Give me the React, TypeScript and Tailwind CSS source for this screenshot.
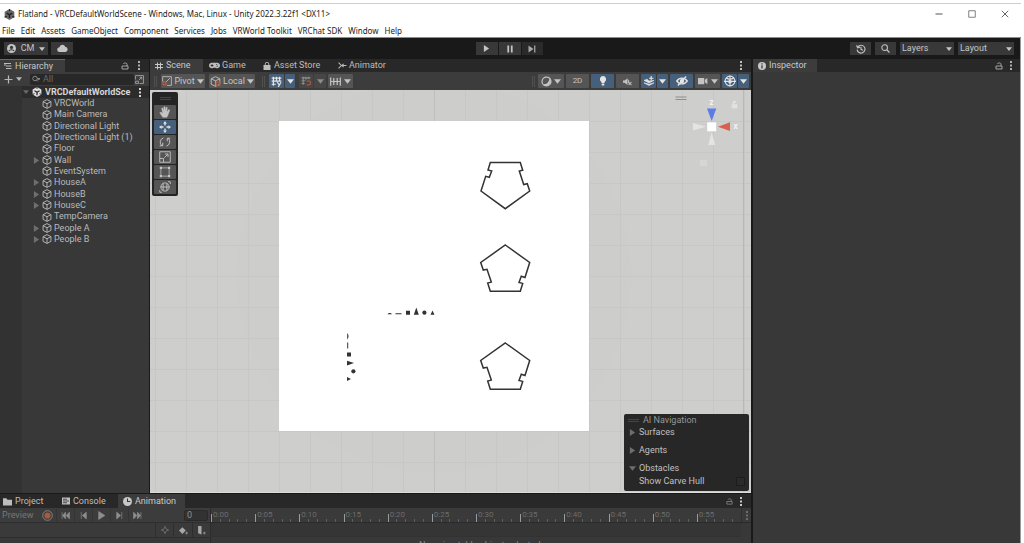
import type { ReactNode } from 'react';
import { clsx } from 'clsx';

const menuItems = [
  'File',
  'Edit',
  'Assets',
  'GameObject',
  'Component',
  'Services',
  'Jobs',
  'VRWorld Toolkit',
  'VRChat SDK',
  'Window',
  'Help',
];

const hierarchyItems = [
  { name: 'VRCWorld', expandable: false },
  { name: 'Main Camera', expandable: false },
  { name: 'Directional Light', expandable: false },
  { name: 'Directional Light (1)', expandable: false },
  { name: 'Floor', expandable: false },
  { name: 'Wall', expandable: true },
  { name: 'EventSystem', expandable: false },
  { name: 'HouseA', expandable: true },
  { name: 'HouseB', expandable: true },
  { name: 'HouseC', expandable: true },
  { name: 'TempCamera', expandable: false },
  { name: 'People A', expandable: true },
  { name: 'People B', expandable: true },
];

const timeLabels = [
  '0:00', '0:05', '0:10', '0:15', '0:20', '0:25',
  '0:30', '0:35', '0:40', '0:45', '0:50', '0:55',
];

/* ---------- icons ---------- */

type IconProps = { className?: string; children?: ReactNode };

function Icon({ className, children }: IconProps) {
  return (
    <svg
      viewBox="0 0 16 16"
      className={clsx('shrink-0', className)}
      fill="none"
      stroke="currentColor"
      strokeWidth="1.8"
      aria-hidden="true"
    >
      {children}
    </svg>
  );
}

function Caret({ className = 'size-[7px]' }: IconProps) {
  return (
    <Icon className={className}>
      <path d="M0 3h16l-8 10z" fill="currentColor" stroke="none" />
    </Icon>
  );
}

function RightCaret({ className = 'size-[7px]' }: IconProps) {
  return (
    <Icon className={className}>
      <path d="M2 0v16l12-8z" fill="currentColor" stroke="none" />
    </Icon>
  );
}

function Kebab({ className = 'h-[9px] w-[4px]' }: IconProps) {
  return (
    <svg viewBox="0 0 4 9" className={clsx('shrink-0', className)} fill="currentColor" aria-hidden="true">
      <path d="M1 0h2v2H1zM1 3.500h2v2H1zM1 7h2v2H1z" />
    </svg>
  );
}

function LockIcon({ className = 'size-[8px]' }: IconProps) {
  return (
    <Icon className={className}>
      <path d="M2 8h12v6H2zM12 8V4.500C12 2.500 10.500 2 8.500 2S5 2.500 5 4" />
    </Icon>
  );
}

function UnityCube({ className = 'size-[9px]' }: IconProps) {
  return (
    <Icon className={className}>
      <path d="M8 0l7 4v8l-7 4-7-4V4z" fill="currentColor" stroke="none" />
      <path d="M8 8.500V13M8 8.500L4 6M8 8.500L12 6" stroke="#222" strokeWidth="2" />
      <path d="M8 0v3M1 12l3-1.500M15 12l-3-1.500" stroke="#222" strokeWidth="1.500" />
    </Icon>
  );
}

function CubeIcon({ className = 'size-[10px]' }: IconProps) {
  return (
    <Icon className={className}>
      <path d="M8 1l6.300 3.200v7.600L8 15l-6.300-3.200V4.200zM1.700 4.200L8 7.600l6.300-3.400M8 7.600V15" strokeWidth="1.500" />
    </Icon>
  );
}

function Grip() {
  return <span className="h-[11px] w-[3px] shrink-0 border-x border-[#505050]" />;
}

/* ---------- shared controls ---------- */

type ToolButtonProps = {
  label: string;
  className?: string;
  active?: boolean;
  children: ReactNode;
};

function ToolButton({ label, className, active, children }: ToolButtonProps) {
  return (
    <button
      type="button"
      aria-label={label}
      className={clsx(
        'flex h-[14px] shrink-0 items-center justify-center rounded-[1px]',
        active ? 'bg-[#46607c] text-[#e4e4e4]' : 'bg-[#555555] text-[#c4c4c4]',
        className
      )}
    >
      {children}
    </button>
  );
}

type TabProps = { label: string; icon: ReactNode; className?: string; active?: boolean };

function Tab({ label, icon, className, active }: TabProps) {
  return (
    <button
      type="button"
      role="tab"
      aria-selected={active ?? false}
      className={clsx(
        'flex h-full shrink-0 items-center whitespace-nowrap',
        active ? 'bg-[#3c3c3c] text-[#c8c8c8]' : 'text-[#bdbdbd]',
        className
      )}
    >
      {icon}
      {label}
    </button>
  );
}

/* ---------- window chrome ---------- */

function TitleBar() {
  return (
    <header className="shrink-0 border-b border-[#8c8c8c] bg-white font-['Noto_Sans','Open_Sans',sans-serif] text-[#1c1c1c]">
      <div className="h-[3px]" />
      <div className="flex h-[21px] items-center justify-between border-t border-[#cfcfcf] pl-1">
        <div className="flex items-center gap-[3px] whitespace-nowrap text-[8px]">
          <UnityCube className="size-[11px] text-[#666]" />
          <h1>Flatland - VRCDefaultWorldScene - Windows, Mac, Linux - Unity 2022.3.22f1 &lt;DX11&gt;</h1>
        </div>
        <div className="flex items-center gap-[25px] pr-[12px] text-[#555]">
          <button type="button" aria-label="Minimize">
            <Icon className="size-[8px]">
              <path d="M1 8h14" strokeWidth="2" />
            </Icon>
          </button>
          <button type="button" aria-label="Maximize">
            <Icon className="size-[8px]">
              <path d="M1.500 1.500h13v13h-13z" strokeWidth="1.500" />
            </Icon>
          </button>
          <button type="button" aria-label="Close">
            <Icon className="size-[8px]">
              <path d="M1.500 1.500l13 13M14.500 1.500l-13 13" />
            </Icon>
          </button>
        </div>
      </div>
      <nav className="flex h-[13px] items-center gap-[6px] whitespace-nowrap pl-[2px] text-[8px]">
        {menuItems.map((item) => (
          <button key={item} type="button">
            {item}
          </button>
        ))}
      </nav>
    </header>
  );
}

function MainToolbar() {
  const button = 'flex h-[13px] items-center justify-center bg-[#383838] text-[#c4c4c4]';
  return (
    <div className="grid h-[21px] shrink-0 grid-cols-[1fr_auto_1fr] items-center bg-[#191919] pl-1 pr-[6px] text-[9px]">
      <div className="flex gap-[3px]">
        <button type="button" className={clsx(button, 'w-[44px] gap-[5px]')}>
          <Icon className="size-[9px]">
            <circle cx="8" cy="8" r="8" fill="currentColor" stroke="none" />
            <circle cx="8" cy="6" r="2.800" fill="#383838" stroke="none" />
            <path d="M3.500 12.500c1-3 8-3 9 0" stroke="#383838" strokeWidth="2" />
          </Icon>
          CM
          <Caret className="size-[6px]" />
        </button>
        <button type="button" aria-label="Cloud" className={clsx(button, 'w-[22px]')}>
          <Icon className="size-[11px]">
            <path
              d="M4 13a3.500 3.500 0 0 1-.5-7A4.500 4.500 0 0 1 12 5.500 3.800 3.800 0 0 1 12.500 13z"
              fill="currentColor"
              stroke="none"
            />
          </Icon>
        </button>
      </div>
      <div className="flex gap-px">
        <button type="button" aria-label="Play" className={clsx(button, 'w-[22px]')}>
          <RightCaret className="size-[7px]" />
        </button>
        <button type="button" aria-label="Pause" className={clsx(button, 'w-[22px]')}>
          <Icon className="size-[8px]">
            <path d="M4.500 1v14M11.500 1v14" strokeWidth="3.500" />
          </Icon>
        </button>
        <button type="button" aria-label="Step" className="flex h-[13px] w-[21px] items-center justify-center bg-[#2a2a2a] text-[#a8a8a8]">
          <Icon className="size-[8px]">
            <path d="M1 1v14l10-7z" fill="currentColor" stroke="none" />
            <path d="M13.500 1v14" strokeWidth="2.500" />
          </Icon>
        </button>
      </div>
      <div className="flex justify-end gap-1">
        <button type="button" aria-label="Undo history" className={clsx(button, 'w-[21px]')}>
          <Icon className="size-[10px]">
            <path d="M3 4.500A6.300 6.300 0 1 1 1.800 9M1 2l1.500 4L6.500 5M8 4.500V8.500l3 1.500" />
          </Icon>
        </button>
        <button type="button" aria-label="Search" className={clsx(button, 'w-[21px]')}>
          <Icon className="size-[9px]">
            <circle cx="6.500" cy="6.500" r="5" />
            <path d="M10.500 10.500L15 15" strokeWidth="2.200" />
          </Icon>
        </button>
        <button type="button" className="flex h-[13px] w-[54px] items-center justify-between bg-[#383838] px-[2px] text-[#c4c4c4]">
          Layers
          <Caret className="size-[6px]" />
        </button>
        <button type="button" className="flex h-[13px] w-[56px] items-center justify-between bg-[#383838] px-[2px] text-[#c4c4c4]">
          Layout
          <Caret className="size-[6px]" />
        </button>
      </div>
    </div>
  );
}

/* ---------- hierarchy ---------- */

function Hierarchy() {
  return (
    <aside className="flex w-[149px] shrink-0 flex-col overflow-hidden bg-[#383838]">
      <div className="flex h-[13px] shrink-0 items-center justify-between bg-[#282828]">
        <Tab
          active
          label="Hierarchy"
          className="w-[65px] gap-[3px] border-t border-[#3a72b0] pl-1"
          icon={
            <Icon className="size-[8px]">
              <path d="M0 3h14M4 8h11M4 13h11M2 3v5" />
            </Icon>
          }
        />
        <div className="flex items-center gap-[8px] pr-[8px] text-[#b0b0b0]">
          <LockIcon />
          <Kebab />
        </div>
      </div>
      <div className="flex h-[14px] shrink-0 items-center bg-[#3c3c3c] pl-1 pr-[5px] text-[#b8b8b8]">
        <button type="button" aria-label="Create" className="flex items-center gap-[3px]">
          <Icon className="size-[9px]">
            <path d="M8 1v14M1 8h14" strokeWidth="2.200" />
          </Icon>
          <Caret className="size-[6px]" />
        </button>
        <label className="ml-[8px] flex h-[11px] min-w-0 flex-1 items-center gap-[3px] rounded-[2px] bg-[#282828] pl-[2px]">
          <Icon className="size-[8px] text-[#909090]">
            <circle cx="6" cy="7" r="4.500" />
            <path d="M9 10l3 3M11 7h5l-2.500 3z" />
          </Icon>
          <input
            aria-label="Search hierarchy"
            placeholder="All"
            className="min-w-0 flex-1 bg-transparent text-[9px] outline-none placeholder:text-[#6a6a6a]"
          />
        </label>
        <button type="button" aria-label="Open search" className="ml-px">
          <Icon className="size-[9px]">
            <path d="M1 8V1h14v14H8M1 11h5v4H1zM7 9l5-5M8 4h4v4" strokeWidth="1.300" />
          </Icon>
        </button>
      </div>
      <div className="flex flex-1">
        <div className="w-[22px] shrink-0 bg-[#323232]" />
        <div className="min-w-0 flex-1">
          <div className="flex h-[12px] items-center gap-[3px] bg-[#2c2c2c] pl-px pr-[7px] font-bold text-[#d6d6d6]">
            <Caret className="size-[6px] text-[#6a6a6a]" />
            <UnityCube className="size-[10px] text-[#e0e0e0]" />
            <span className="min-w-0 flex-1 overflow-hidden whitespace-nowrap">VRCDefaultWorldSce</span>
            <Kebab />
          </div>
          <ul className="grid h-[147px] auto-rows-fr text-[#bababa]">
            {hierarchyItems.map((item) => (
              <li key={item.name} className="flex items-center whitespace-nowrap pl-[11px]">
                <span className="flex w-[9px]">
                  {item.expandable && <RightCaret className="size-[7px] text-[#6e6e6e]" />}
                </span>
                <CubeIcon className="mr-[2px] size-[10px]" />
                {item.name}
              </li>
            ))}
          </ul>
        </div>
      </div>
    </aside>
  );
}

/* ---------- scene view ---------- */

function SceneTabs() {
  return (
    <div className="flex h-[13px] shrink-0 items-center bg-[#282828]" role="tablist">
      <Tab
        active
        label="Scene"
        className="w-[53px] gap-[3px] pl-[5px]"
        icon={
          <Icon className="size-[8px]">
            <path d="M5 1v14M11 1v14M0 5h16M0 11h16" strokeWidth="2" />
          </Icon>
        }
      />
      <Tab
        label="Game"
        className="w-[55px] gap-[2px] pl-[6px]"
        icon={
          <svg viewBox="0 0 20 12" className="h-[7px] w-[11px]" aria-hidden="true">
            <path d="M5.500 1h9a5 5 0 1 1-2.500 9H8A5 5 0 1 1 5.500 1z" fill="currentColor" />
            <path d="M5.500 3.500v5M3 6h5M13 4.500h2M14 7.500h2" stroke="#282828" strokeWidth="1.600" />
          </svg>
        }
      />
      <Tab
        label="Asset Store"
        className="w-[75px] gap-[3px] pl-[5px]"
        icon={
          <Icon className="size-[8px]">
            <path d="M1 6h14v10H1z" fill="currentColor" stroke="none" />
            <path d="M4.500 7V4a3.500 3.500 0 0 1 7 0v3" />
          </Icon>
        }
      />
      <Tab
        label="Animator"
        className="gap-[2px] pl-[5px]"
        icon={
          <Icon className="size-[9px]">
            <path d="M1 3l5 5-5 5M6 8h9M10 5l-3 3 3 3" />
          </Icon>
        }
      />
      <Kebab className="ml-auto mr-[8px] h-[9px] w-[4px] text-[#c0c0c0]" />
    </div>
  );
}

function SceneToolbar() {
  return (
    <div className="flex h-[18px] shrink-0 items-center justify-between bg-[#3c3c3c] pl-[4px] pr-[2px]">
      <div className="flex items-center">
        <Grip />
        <ToolButton label="Pivot" className="ml-[4px] w-[44px] gap-[2px]">
          <Icon className="size-[10px]">
            <path d="M1 9V1h14v14H8M6 10l7-7" strokeWidth="1.300" />
            <circle cx="4" cy="12" r="2.500" stroke="#c8583a" strokeWidth="2" />
          </Icon>
          Pivot
          <Caret />
        </ToolButton>
        <ToolButton label="Local" className="ml-[4px] w-[46px] gap-[2px]">
          <Icon className="size-[11px]">
            <path d="M8 1l6.300 3v8L8 15l-6.300-3V4zM1.700 4L8 7l6.300-3M8 7v8" strokeWidth="1.300" />
            <path d="M9 9h5v5H9z" stroke="#c8583a" />
          </Icon>
          Local
          <Caret />
        </ToolButton>
        <span className="ml-[7px] flex">
          <Grip />
        </span>
        <ToolButton active label="Grid visibility" className="ml-[4px] w-[15px]">
          <Icon className="size-[11px]">
            <path d="M3.500 1v13M8 1v7M12.500 1v6M1 3h14M1 7.500h14M1 12h6M9 9l3 4M14.500 9l-4 7" />
          </Icon>
        </ToolButton>
        <ToolButton active label="Grid options" className="ml-px w-[10px]">
          <Caret />
        </ToolButton>
        <ToolButton label="Grid snapping" className="ml-[4px] w-[14px] bg-[#464646]! text-[#8c8c8c]!">
          <Icon className="size-[10px]">
            <path d="M3.500 1v13M8 1v5M12.500 1v4M1 3h14M1 7.500h6M1 12h5" />
            <path d="M9 8h3.500a2.800 2.800 0 0 1 0 6H9" stroke="#a85a42" strokeWidth="2" />
          </Icon>
        </ToolButton>
        <ToolButton label="Snap options" className="ml-px w-[12px] bg-[#464646]! text-[#8c8c8c]!">
          <Caret />
        </ToolButton>
        <ToolButton label="Snap increment" className="ml-[2px] w-[25px] gap-[3px]">
          <Icon className="size-[11px]">
            <path d="M1 2v12M15 2v12M5.500 3v10M10.500 3v10M2 8h12" />
          </Icon>
          <Caret />
        </ToolButton>
      </div>
      <div className="flex items-center gap-[2px]">
        <span className="mr-px flex">
          <Grip />
        </span>
        <ToolButton label="Draw mode" className="w-[26px] gap-[2px]">
          <Icon className="size-[11px]">
            <circle cx="8" cy="8" r="6.500" strokeWidth="1.800" />
            <path d="M13 5a6.500 6.500 0 0 1-9 8c5 0 8-3 9-8z" fill="currentColor" />
          </Icon>
          <Caret />
        </ToolButton>
        <ToolButton label="2D" className="w-[23px] text-[8px]">
          2D
        </ToolButton>
        <ToolButton active label="Lighting" className="w-[23px]">
          <Icon className="size-[10px]">
            <path d="M8 0a5 5 0 0 1 3 9l-1 2H6L5 9a5 5 0 0 1 3-9zM6 12h4v3H6z" fill="currentColor" stroke="none" />
          </Icon>
        </ToolButton>
        <ToolButton label="Audio" className="w-[23px]">
          <Icon className="size-[9px]">
            <path d="M0 6h3l5-4v12L3 10H0z" fill="currentColor" stroke="none" />
            <path d="M10 5v6M10 9l5 5M15 9l-5 5" />
          </Icon>
        </ToolButton>
        <div className="flex gap-px">
          <ToolButton active label="Effects" className="w-[15px]">
            <Icon className="size-[10px]">
              <path d="M0 7l5-2 3 3 8-1-8 4zM0 11l8 4 8-4-8 2z" fill="currentColor" strokeWidth="1" />
              <path d="M11.500 0v7M8 3.500h7" />
            </Icon>
          </ToolButton>
          <ToolButton active label="Effects options" className="w-[11px]">
            <Caret />
          </ToolButton>
        </div>
        <ToolButton active label="Scene visibility" className="w-[23px]">
          <Icon className="size-[12px]">
            <path d="M1 8c3.500-5 10.500-5 14 0-3.500 5-10.500 5-14 0zM2.500 14L13.500 2" />
            <circle cx="8" cy="8" r="2" fill="currentColor" />
          </Icon>
        </ToolButton>
        <ToolButton label="Camera settings" className="w-[25px] gap-[3px]">
          <Icon className="size-[10px]">
            <path d="M0 3h10v10H0zM11 6l4-3v10l-4-3z" fill="currentColor" stroke="none" />
          </Icon>
          <Caret />
        </ToolButton>
        <div className="flex gap-px">
          <ToolButton active label="Gizmos" className="w-[15px]">
            <Icon className="size-[12px]">
              <circle cx="8" cy="8" r="6.500" strokeWidth="1.400" />
              <path d="M8 1v14M0 8.500h16M3 4c3 2 7 2 10 0" strokeWidth="1.400" />
              <circle cx="8" cy="9" r="1.500" fill="currentColor" />
            </Icon>
          </ToolButton>
          <ToolButton active label="Gizmo options" className="w-[11px]">
            <Caret />
          </ToolButton>
        </div>
      </div>
    </div>
  );
}

const sceneTools = [
  {
    name: 'View',
    icon: (
      <path
        d="M5 15L1 9l1.500-1L5 10 3.500 3 5 2.500 6.500 7V1H8v6l1.500-5.500L11 2l-.5 6L13 4.500l1.300.8L12 12l-1.500 3z"
        fill="currentColor"
        strokeWidth=".6"
      />
    ),
  },
  {
    name: 'Move',
    icon: (
      <>
        <path d="M8 3v3M8 10v3M3 8h3M10 8h3" />
        <path d="M8 0l2.500 3.500h-5zM8 16l2.500-3.500h-5zM0 8l3.500-2.500v5zM16 8l-3.500-2.500v5z" fill="currentColor" stroke="none" />
      </>
    ),
  },
  {
    name: 'Rotate',
    icon: <path d="M6 2.500A6 6 0 0 0 4 13M10 13.500A6 6 0 0 0 12 3M1 13h4V9M15 3h-4v4" strokeWidth="1.300" />,
  },
  {
    name: 'Scale',
    icon: <path d="M1 1h14v14H1zM1 10h5v5M7 9l5-5M8 4h4v4" strokeWidth="1.200" />,
  },
  {
    name: 'Rect',
    icon: (
      <>
        <path d="M2.500 2.500h11v11h-11z" strokeWidth="1" />
        <path d="M1 1h3v3H1zM12 1h3v3h-3zM1 12h3v3H1zM12 12h3v3h-3z" fill="currentColor" stroke="none" />
      </>
    ),
  },
  {
    name: 'Transform',
    icon: (
      <>
        <circle cx="8" cy="8" r="5.500" strokeWidth="1.200" />
        <path d="M5.500 3v10M10.500 3v10M2 8h12M12 1h3v3M1 12v3h3" strokeWidth="1.200" />
      </>
    ),
  },
];

function ToolPalette() {
  return (
    <div className="absolute left-[2px] top-[2px] flex w-[26px] flex-col gap-px rounded-[2px] bg-[#242424] px-[2px] pb-[2px]">
      <div className="flex h-[12px] items-center justify-center">
        <span className="h-[3px] w-[11px] border-y border-[#454545]" />
      </div>
      {sceneTools.map((tool) => (
        <ToolButton key={tool.name} label={tool.name} active={tool.name === 'Move'} className="w-[22px]">
          <Icon className="size-[12px]">{tool.icon}</Icon>
        </ToolButton>
      ))}
    </div>
  );
}

function NavigationOverlay() {
  return (
    <section className="absolute bottom-px right-[2px] h-[77px] w-[125px] rounded-[2px] bg-[#272727] text-[#c0c0c0]">
      <h2 className="flex h-[12px] items-center gap-[4px] pl-[4px] text-[#969696]">
        <span className="h-[3px] w-[11px] border-y border-[#454545]" />
        AI Navigation
      </h2>
      <button type="button" className="flex h-[13px] items-center gap-[3px] pl-[5px]">
        <RightCaret className="size-[7px] text-[#6e6e6e]" />
        Surfaces
      </button>
      <button type="button" className="mt-[5px] flex h-[13px] items-center gap-[3px] pl-[5px]">
        <RightCaret className="size-[7px] text-[#6e6e6e]" />
        Agents
      </button>
      <button type="button" className="mt-[5px] flex h-[13px] items-center gap-[3px] pl-[5px]">
        <Caret className="size-[7px] text-[#6e6e6e]" />
        Obstacles
      </button>
      <label className="flex h-[13px] items-center justify-between pl-[15px] pr-[4px]">
        Show Carve Hull
        <input type="checkbox" className="size-[9px] appearance-none rounded-[1px] border border-[#1c1c1c] bg-[#2a2a2a]" />
      </label>
    </section>
  );
}

// グリッドは31単位、中心は (434, 276)
const gridX = Array.from({ length: 20 }, (_, i) => 155 + i * 31);
const gridY = Array.from({ length: 13 }, (_, i) => 121 + i * 31);

const houseUp =
  'M505.300 245l24.400 17.500-4.700 15-3.700-1.300-2.300 6.200 3.700 1-2.400 7.800h-30l-2.600-8.100 3.600-1-4.300-12.800-3.700 .8-2.600-7.600z';

function SceneCanvas() {
  return (
    <svg
      viewBox="150 90 601 402"
      preserveAspectRatio="xMidYMid slice"
      className="absolute inset-0 size-full"
      role="img"
      aria-label="Scene"
    >
      <path d="M150 90h601v403H150z" fill="#cececc" />
      <circle cx="434" cy="276" r="197" fill="#cdcdcb" />
      {gridX.map((x) => (
        <path key={x} d={`M${x}.500 90v403`} stroke={x === 434 ? '#bebebc' : '#c7c7c5'} />
      ))}
      {gridY.map((y) => (
        <path key={y} d={`M150 ${y}.500h601`} stroke="#c7c7c5" />
      ))}
      <path d="M743.500 90v403" stroke="#b8b8b6" />
      <path d="M279 121h310v310H279z" fill="#fff" />

      {/* houses */}
      <g fill="none" stroke="#333336" strokeWidth="1.500">
        <path d="M490.300 162.500h30l2.400 7.800-3.400 .7 4.400 13.600 3.600-.9 2.400 7.300-24.400 17.700-24.300-17.700 4.700-14.700 3.600 1 2.400-6.300-3.700-1z" />
        <path d={houseUp} />
        <path d={houseUp} transform="translate(0 98)" />
      </g>

      {/* people */}
      <g fill="#333336">
        <path d="M387.500 314.200c1-1.600 3.500-1.600 4.500 0zM395.500 313.200h6v1h-6zM406 310.700h4v4h-4zM416.300 307.500l2.500 7.200h-5zM432.500 310.500l2 4.200h-4z" />
        <circle cx="424.400" cy="312.700" r="2.100" />
        <path d="M347.200 333c1.800 1.500 1.800 5 0 6.500zM347.200 342.500h1v6h-1zM347 352.500h4v4h-4zM347 360.700l7 2.400-7 2.300zM347 377l4 2-4 2z" />
        <circle cx="353.400" cy="371.300" r="2.100" />
      </g>

      {/* orientation gizmo */}
      <path d="M675.500 97h11M675.500 99.500h11" stroke="#8e8e8e" strokeWidth="1.200" />
      <path d="M707 108.500h9.300L711.700 121z" fill="#5c7ce8" />
      <path d="M718 126.700l12-4.400v8.800z" fill="#d8604f" />
      <path d="M706 126.700l-13-3.700v7.400zM711.700 132l-3.500 13h7z" fill="#e4e4e2" />
      <path d="M707.200 122.300h9v9h-9z" fill="#fff" />
      <g className="font-['Inter',sans-serif] text-[8px] font-bold" fill="#f2f2f2" textAnchor="middle">
        <text x="711.500" y="105">z</text>
        <text x="735.500" y="129">x</text>
      </g>
      <path d="M732 104.500h5v3.500h-5zM733 104v-1.500a1.500 1.500 0 0 1 3 0" fill="#e2e2e0" stroke="#e2e2e0" strokeWidth=".8" />
      <path d="M700 161h7M700 163h7M700 165h7" stroke="#dededc" />
    </svg>
  );
}

function SceneView() {
  return (
    <main className="flex min-w-0 flex-1 flex-col">
      <SceneTabs />
      <SceneToolbar />
      <div className="relative flex-1 overflow-hidden border-b border-[#dcdcda] bg-[#cececc]">
        <SceneCanvas />
        <ToolPalette />
        <NavigationOverlay />
      </div>
    </main>
  );
}

/* ---------- animation panel ---------- */

const transport = [
  { name: 'First key', path: 'M2 2v12M8 2v12L3 8zM15 2v12L9 8z' },
  { name: 'Previous key', path: 'M4 2v12M13 2v12L6 8z' },
  { name: 'Play animation', path: 'M3 1v14l11-7z' },
  { name: 'Next key', path: 'M12 2v12M3 2v12l7-6z' },
  { name: 'Last key', path: 'M14 2v12M8 2v12l5-6zM1 2v12l6-6z' },
];

function AnimationPanel() {
  return (
    <section className="flex h-[49px] shrink-0 flex-col overflow-hidden bg-[#383838]">
      <div className="flex h-[14px] shrink-0 items-center bg-[#282828]" role="tablist">
        <Tab
          label="Project"
          className="w-[57px] gap-[3px] pl-[3px]"
          icon={
            <Icon className="size-[9px]">
              <path d="M0 2h6l2 3h8v10H0z" fill="currentColor" stroke="none" />
            </Icon>
          }
        />
        <Tab
          label="Console"
          className="w-[61px] gap-[3px] pl-[5px]"
          icon={
            <Icon className="size-[8px]">
              <path d="M0 1h16v14H0z" fill="currentColor" stroke="none" />
              <path d="M2 4.500h8M2 8h12M2 11.500h8" stroke="#282828" strokeWidth="1.500" />
            </Icon>
          }
        />
        <Tab
          active
          label="Animation"
          className="w-[67px] gap-[3px] pl-[5px]"
          icon={
            <Icon className="size-[9px]">
              <circle cx="8" cy="8" r="8" fill="currentColor" stroke="none" />
              <path d="M8 2.500V8h5" stroke="#333" strokeWidth="1.800" />
            </Icon>
          }
        />
        <div className="ml-auto flex items-center gap-[6px] pr-[8px] text-[#8a8a8a]">
          <LockIcon className="size-[7px]" />
          <Kebab className="h-[9px] w-[4px] text-[#c8c8c8]" />
        </div>
      </div>
      <div className="flex min-h-0 flex-1">
        <div className="flex w-[211px] shrink-0 flex-col border-r border-[#2c2c2c] text-[#8e8e8e]">
          <div className="flex h-[15px] shrink-0 items-center border-b border-[#2e2e2e] bg-[#3c3c3c] pl-[2px] pr-[2px]">
            <span className="w-[36px] text-[#787878]">Preview</span>
            <button type="button" aria-label="Record" className="flex w-[18px] justify-center">
              <Icon className="size-[11px]">
                <circle cx="8" cy="8" r="7" stroke="#8a8a8a" strokeWidth="1.300" />
                <circle cx="8" cy="8" r="4.500" fill="#a85a3c" stroke="none" />
              </Icon>
            </button>
            {transport.map((item) => (
              <button
                key={item.name}
                type="button"
                aria-label={item.name}
                className="flex h-full w-[18px] items-center justify-center border-l border-[#353535]"
              >
                <Icon className="size-[9px]">
                  <path d={item.path} fill="currentColor" strokeWidth="1.200" />
                </Icon>
              </button>
            ))}
            <input
              aria-label="Frame"
              defaultValue="0"
              className="ml-auto h-[11px] w-[24px] rounded-[2px] border border-[#2a2a2a] bg-[#323232] px-[2px] outline-none"
            />
          </div>
          <div className="flex h-[15px] shrink-0 items-center justify-end border-b border-[#2e2e2e] bg-[#3a3a3a]">
            <button type="button" aria-label="Filter by selection" className="flex h-full w-[18px] items-center justify-center border-l border-[#2e2e2e]">
              <Icon className="size-[8px]">
                <path d="M8 3l5 5-5 5-5-5zM8 0v4M8 12v4M0 8h4M12 8h4" strokeWidth="1.300" />
              </Icon>
            </button>
            <button type="button" aria-label="Add keyframe" className="flex h-full w-[19px] items-center justify-center border-l border-[#2e2e2e] text-[#a8a8a8]">
              <Icon className="size-[9px]">
                <path d="M6 2l6 6-6 6-6-6z" fill="currentColor" stroke="none" />
                <path d="M13.500 10v5M11 12.500h5" strokeWidth="1.200" />
              </Icon>
            </button>
            <button type="button" aria-label="Add event" className="flex h-full w-[18px] items-center justify-center border-l border-[#2e2e2e] text-[#a8a8a8]">
              <Icon className="size-[9px]">
                <path d="M2 0h6v15l-6-2z" fill="currentColor" stroke="none" />
                <path d="M13 10v5M10.500 12.500h5" strokeWidth="1.200" />
              </Icon>
            </button>
          </div>
        </div>
        <div className="flex min-w-0 flex-1 flex-col">
          <div className="flex h-[15px] shrink-0 border-b border-[#2a2a2a] bg-[#3a3a3a]">
            <div className="grid flex-1 grid-cols-12">
              {timeLabels.map((label) => (
                <div key={label} className="relative flex items-end justify-between">
                  <span className="h-[8px] w-px bg-[#9a9a9a]" />
                  <span className="h-[3px] w-px bg-[#5e5e5e]" />
                  <span className="h-[3px] w-px bg-[#5e5e5e]" />
                  <span className="h-[3px] w-px bg-[#5e5e5e]" />
                  <span className="h-[3px] w-px bg-[#5e5e5e]" />
                  <span />
                  <span className="absolute left-[2px] top-[3px] text-[8px] leading-none text-[#6c6c6c]">
                    {label}
                  </span>
                </div>
              ))}
            </div>
            <div className="flex w-[10px] items-center justify-center border-l border-[#303030] text-[#6c6c6c]">
              <Kebab />
            </div>
          </div>
          <div className="mr-[10px] h-[14px] shrink-0 border-b border-[#323232] bg-[#353535]" />
          <p className="pt-[4px] text-center text-[#8a8a8a]">No animatable object selected.</p>
        </div>
      </div>
    </section>
  );
}

/* ---------- inspector ---------- */

function Inspector() {
  return (
    <aside className="flex w-[267px] shrink-0 flex-col bg-[#383838]">
      <div className="flex h-[13px] shrink-0 items-center justify-between bg-[#282828]">
        <Tab
          active
          label="Inspector"
          className="w-[64px] gap-[3px] pl-[5px]"
          icon={
            <Icon className="size-[8px]">
              <circle cx="8" cy="8" r="8" fill="currentColor" stroke="none" />
              <path d="M8 2.500v2.500M8 6.500v6.500" stroke="#333" strokeWidth="2.400" />
            </Icon>
          }
        />
        <div className="flex items-center gap-[6px] pr-[7px] text-[#b0b0b0]">
          <LockIcon />
          <Kebab />
        </div>
      </div>
    </aside>
  );
}

export default function App() {
  return (
    <div className="flex h-screen flex-col overflow-hidden bg-white pr-[3px] font-['Roboto','Liberation_Sans',sans-serif] text-[9px] leading-none">
      <TitleBar />
      <div className="flex min-h-0 flex-1 flex-col border-r border-[#9a9a9a] bg-[#191919]">
        <MainToolbar />
        <div className="flex min-h-0 flex-1 gap-[2px]">
          <div className="flex min-w-0 flex-1 flex-col">
            <div className="flex min-h-0 flex-1 gap-px pb-px">
              <Hierarchy />
              <SceneView />
            </div>
            <AnimationPanel />
          </div>
          <Inspector />
        </div>
      </div>
    </div>
  );
}
